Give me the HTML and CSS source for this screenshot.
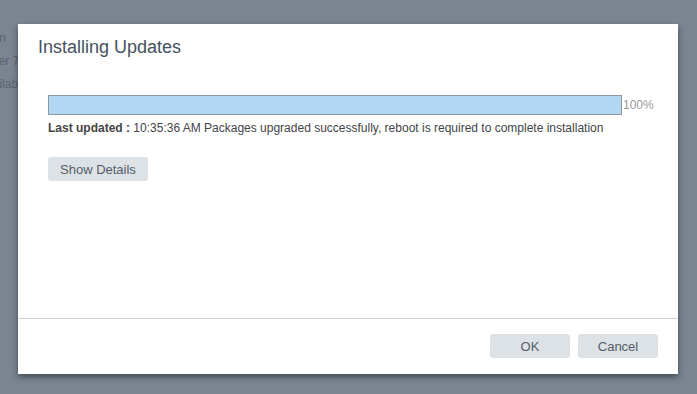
FILE: index.html
```html
<!DOCTYPE html>
<html lang="en">
<head>
    <meta charset="UTF-8">
    <meta name="viewport" content="width=device-width, initial-scale=1.0">
    <title>Installing Updates</title>
    <link rel="stylesheet" href="styles.css">
</head>
<body>

    <!-- page behind the modal -->
    <div class="backdrop-page">
        <div class="bg-line line-1">Version</div>
        <div class="bg-line line-2">Server 7</div>
        <div class="bg-line line-3">Available</div>
    </div>

    <!-- modal -->
    <div class="modal">
        <div class="modal-header">
            <h2>Installing Updates</h2>
        </div>

        <div class="modal-body">
            <div class="progress-row">
                <div class="progress-bar">
                    <div class="progress-fill" style="width: 100%"></div>
                </div>
                <span class="progress-label">100%</span>
            </div>
            <p class="status-text"><strong>Last updated :</strong> 10:35:36 AM Packages upgraded successfully, reboot is required to complete installation</p>

            <button type="button" class="btn">Show Details</button>
        </div>

        <div class="modal-footer">
            <button type="button" class="btn btn-wide">OK</button>
            <button type="button" class="btn btn-wide">Cancel</button>
        </div>
    </div>

</body>
</html>
```

FILE: styles.css
```css
body, html {
    margin: 0;
    padding: 0;
    height: 100%;
    font-family: 'Liberation Sans', Arial, sans-serif;
    background-color: #7b8490;
    overflow: hidden;
}

/* pagina de fundo */
.backdrop-page {
    padding-top: 30px;
    color: #5b636e;
    font-size: 12px;
}

.bg-line {
    height: 23px;
    line-height: 16px;
    white-space: nowrap;
}

.line-1 { margin-left: -34px; }
.line-2 { margin-left: -26px; }
.line-3 { margin-left: -21px; }

/* modal */
.modal {
    position: absolute;
    top: 24px;
    left: 18px;
    width: 660px;
    height: 350px;
    background-color: white;
    box-shadow: 0 3px 6px rgba(0, 0, 0, 0.45);
    display: flex;
    flex-direction: column;
}

.modal-header {
    padding: 12px 20px 0;
}

.modal-header h2 {
    margin: 0;
    font-size: 18px;
    line-height: 22px;
    font-weight: 400;
    color: #45525f;
}

.modal-body {
    flex: 1;
    padding: 37px 30px 0;
}

.progress-row {
    display: flex;
    align-items: center;
}

.progress-bar {
    flex-shrink: 0;
    width: 572px;
    height: 18px;
    border: 1px solid #8b97a2;
    background-color: #e9eef3;
}

.progress-fill {
    height: 100%;
    background-color: #b3d6f2;
}

.progress-label {
    flex-shrink: 0;
    font-size: 12px;
    color: #999;
    margin-left: 1px;
}

.status-text {
    margin: 5px 0 0;
    font-size: 12px;
    line-height: 16px;
    color: #3f4448;
}

.status-text strong {
    color: #444;
}

.btn {
    margin-top: 21px;
    height: 24px;
    padding: 0 12px;
    border: none;
    border-radius: 3px;
    background-color: #dde2e7;
    color: #545d67;
    font-family: 'Liberation Sans', Arial, sans-serif;
    font-size: 13px;
    cursor: pointer;
}

.btn:hover {
    background-color: #cfd6dd;
}

.modal-footer {
    border-top: 1px solid #d3d3d3;
    padding: 15px 20px 16px;
    display: flex;
    justify-content: flex-end;
    gap: 8px;
}

.modal-footer .btn {
    margin-top: 0;
}

.btn-wide {
    width: 80px;
}
```
